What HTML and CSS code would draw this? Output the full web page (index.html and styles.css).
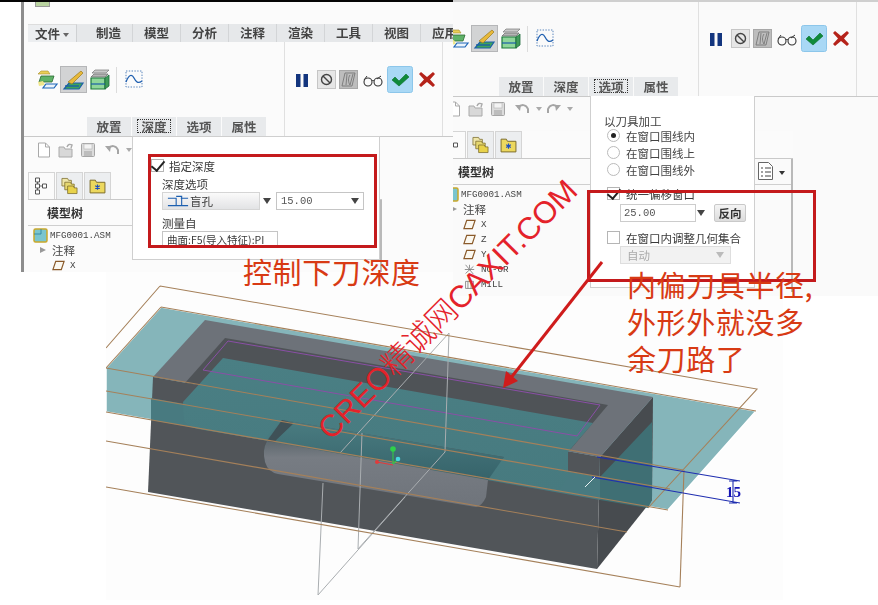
FILE: index.html
```html
<!DOCTYPE html>
<html lang="zh-CN">
<head>
<meta charset="utf-8">
<title>CREO 下刀深度</title>
<link rel="stylesheet" href="styles.css">
</head>
<body>
<svg class="defs" aria-hidden="true">
  <symbol id="i-ref" viewBox="0 0 22 20">
    <path d="M1 4l3-3 7 0 2 3z" fill="#e9cf58" stroke="#a58a2a" stroke-width=".6"/>
    <path d="M4 6h13l-2 6H2z" fill="#5fb268" stroke="#2b6b33" stroke-width=".8"/>
    <path d="M1 12l5-1 2 4-6 1z" fill="#f0e68c"/>
    <path d="M9 14h11l-3 4H6z" fill="#eaf3fb" stroke="#1f66b8" stroke-width="1.2"/>
  </symbol>
  <symbol id="i-pencil" viewBox="0 0 27 27">
    <rect x=".5" y=".5" width="26" height="26" fill="#d2d3d4" stroke="#b5b6b8"/>
    <path d="M4 23l5-6h14l-4 6z" fill="#3fa35a" stroke="#1a5fa8" stroke-width="1.2"/>
    <path d="M8 16L21 5l2 2-11 11z" fill="#e8b93a" stroke="#9a7a1c" stroke-width=".7"/>
    <path d="M5 20h14" stroke="#1a5fa8" stroke-width="1.4"/>
  </symbol>
  <symbol id="i-stack" viewBox="0 0 20 22">
    <path d="M5 1h14l-3 3H2z" fill="#c9c9c9" stroke="#777" stroke-width=".7"/>
    <path d="M4 5h14l-3 3H1z" fill="#b5b5b5" stroke="#666" stroke-width=".7"/>
    <path d="M1 9h14v11H1z" fill="#8fd69a" stroke="#1c7a3a" stroke-width="1.2"/>
    <path d="M15 9l4-3v11l-4 3z" fill="#3f9c5a" stroke="#1c6a3a" stroke-width=".8"/>
    <path d="M1 15h14" stroke="#1a5fa8" stroke-width="1.2"/>
  </symbol>
  <symbol id="i-wave" viewBox="0 0 18 18">
    <rect x="1" y="1" width="16" height="16" fill="none" stroke="#5b86bd" stroke-width="1" stroke-dasharray="1.4 1.4"/>
    <path d="M1 12c3-8 6-8 8-4s4 6 8 3" fill="none" stroke="#1f5fb0" stroke-width="1.3"/>
  </symbol>
  <symbol id="i-pause" viewBox="0 0 12 13">
    <rect x="0" y="0" width="4.5" height="13" fill="#13357e"/>
    <rect x="7.5" y="0" width="4.5" height="13" fill="#13357e"/>
  </symbol>
  <symbol id="i-stop" viewBox="0 0 19 19">
    <rect x=".5" y=".5" width="18" height="18" fill="#e6e6e6" stroke="#c6c6c6"/>
    <circle cx="9.500" cy="9.500" r="5" fill="none" stroke="#444" stroke-width="1.400"/>
    <path d="M6 6l7 7" stroke="#444" stroke-width="1.400"/>
  </symbol>
  <symbol id="i-hatch" viewBox="0 0 19 19">
    <rect x=".5" y=".5" width="18" height="18" fill="#bdbdbd" stroke="#a8a8a8"/>
    <path d="M3 16L6 3h10l-3 13zM8 4l-1 11M11 5c-2 3-2 7 0 10M14 4l-3 11" fill="none" stroke="#777" stroke-width=".9"/>
  </symbol>
  <symbol id="i-glasses" viewBox="0 0 20 12">
    <circle cx="5" cy="7" r="4" fill="none" stroke="#333" stroke-width="1.100"/>
    <circle cx="15" cy="7" r="4" fill="none" stroke="#333" stroke-width="1.100"/>
    <path d="M9 6c1-1 1-1 2 0M1 5l3-4M14 4l4-3" fill="none" stroke="#333" stroke-width="1"/>
  </symbol>
  <symbol id="i-check" viewBox="0 0 26 27">
    <rect x=".5" y=".5" width="25" height="26" rx="2" fill="#a9d8f5" stroke="#8cc6ea"/>
    <path d="M5 14l3-3 4 4 7-7 3 3-10 9z" fill="#0f8a3a" stroke="#0a6f2c" stroke-width=".6"/>
  </symbol>
  <symbol id="i-x" viewBox="0 0 16 15">
    <path d="M0 2l2-2 6 5 6-5 2 2-5 5.500 5 5.500-2 2-6-5-6 5-2-2 5-5.500z" fill="#b5231a"/>
  </symbol>
  <symbol id="i-new" viewBox="0 0 14 16">
    <path d="M1.500 1h7l4 4v10h-11z" fill="#fff" stroke="#a9a9a9"/>
    <path d="M8.500 1v4h4" fill="none" stroke="#a9a9a9"/>
  </symbol>
  <symbol id="i-open" viewBox="0 0 16 15">
    <path d="M1 4h5l1 2h7v8H1z" fill="#d8d8d8" stroke="#aaa"/>
    <path d="M9 4c1-3 3-3 5-2l-1 3" fill="none" stroke="#aaa" stroke-width="1.400"/>
  </symbol>
  <symbol id="i-save" viewBox="0 0 14 14">
    <rect x=".5" y=".5" width="13" height="13" rx="1" fill="#dcdcdc" stroke="#a6a6a6"/>
    <rect x="3" y="1" width="8" height="5" fill="#f4f4f4" stroke="#b5b5b5" stroke-width=".6"/>
    <rect x="3" y="8" width="8" height="5" fill="#bdbdbd"/>
  </symbol>
  <symbol id="i-undo" viewBox="0 0 15 12">
    <path d="M3 5c3-4 8-4 10 1l0 4" fill="none" stroke="#a5a5a5" stroke-width="2"/>
    <path d="M0 2l6 0-1 6z" fill="#a5a5a5"/>
  </symbol>
  <symbol id="i-redo" viewBox="0 0 15 12">
    <path d="M12 5c-3-4-8-4-10 1l0 4" fill="none" stroke="#a5a5a5" stroke-width="2"/>
    <path d="M15 2l-6 0 1 6z" fill="#a5a5a5"/>
  </symbol>
  <symbol id="i-tree" viewBox="0 0 14 18">
    <path d="M1 1h4v4H1zM1 7h4v4H1zM1 13h4v4H1zM8 7h4v4H8z" fill="#fff" stroke="#444" stroke-width=".9"/>
    <path d="M3 5v2M3 11v2M5 9h3" stroke="#444" stroke-width=".8"/>
  </symbol>
  <symbol id="i-folders" viewBox="0 0 18 18">
    <path d="M1 1h6l1 2h3v6H1z" fill="#efe6a8" stroke="#7a6a2a" stroke-width=".8"/>
    <path d="M4 5h6l1 2h3v6H4z" fill="#e6d870" stroke="#7a6a2a" stroke-width=".8"/>
    <path d="M7 9h6l1 2h3v6H7z" fill="#e8d24a" stroke="#7a6a2a" stroke-width=".8"/>
  </symbol>
  <symbol id="i-star" viewBox="0 0 16 15">
    <path d="M1 2h5l1 2h8v10H1z" fill="#ecd85e" stroke="#7a6a2a" stroke-width=".9"/>
    <path d="M8 6v5M5.800 7.200l4.400 2.600M10.200 7.200l-4.400 2.600" stroke="#1c4fc0" stroke-width="1.100"/>
  </symbol>
  <symbol id="i-asm" viewBox="0 0 15 15">
    <rect x="1" y="1" width="13" height="13" rx="1.500" fill="#7ac5cf" stroke="#c9a82a" stroke-width="1.500"/>
    <path d="M1 6h7V1" fill="none" stroke="#2a7fa0" stroke-width=".8"/>
  </symbol>
  <symbol id="i-plane" viewBox="0 0 14 11">
    <path d="M4 1h9l-3 9H1z" fill="#fbf8f0" stroke="#8a5a2a" stroke-width="1.300"/>
  </symbol>
  <symbol id="i-nc" viewBox="0 0 14 14">
    <path d="M2 1l10 12M12 3L2 12M7 1v5M1 7h12" stroke="#777" stroke-width="1" fill="none"/>
  </symbol>
  <symbol id="i-mill" viewBox="0 0 14 14">
    <path d="M2 3h10v9H2zM5 3v9M9 3v9" fill="none" stroke="#777" stroke-width="1"/>
  </symbol>
  <symbol id="i-list" viewBox="0 0 15 18">
    <path d="M.5.500h10l4 4v13H.5z" fill="#fff" stroke="#666"/>
    <path d="M3 6h2M7 6h6M3 10h2M7 10h6M3 14h2M7 14h6" stroke="#444" stroke-width="1.100"/>
  </symbol>
</svg>

<main class="canvas">
  <div class="black-rule"></div>

  <section class="window window-left">
    <div class="clipped-app-icon"></div>
    <nav class="menu-tabs">
      <span class="menu-file">文件 <i class="caret"></i></span>
      <span class="menu-tab">制造</span><span class="menu-tab">模型</span><span class="menu-tab">分析</span><span class="menu-tab">注释</span><span class="menu-tab">渲染</span><span class="menu-tab">工具</span><span class="menu-tab">视图</span><span class="menu-tab">应用</span>
    </nav>
    <div class="ribbon">
      <div class="ribbon-tools tools-left">
        <div class="tool-row">
          <svg class="ico-ref"><use href="#i-ref"/></svg>
          <svg class="ico-pencil"><use href="#i-pencil"/></svg>
          <svg class="ico-stack"><use href="#i-stack"/></svg>
          <span class="tool-sep"></span>
          <svg class="ico-wave"><use href="#i-wave"/></svg>
        </div>
        <div class="sub-tabs">
          <span class="sub-tab">放置</span><span class="sub-tab"><b class="focus">深度</b></span><span class="sub-tab">选项</span><span class="sub-tab">属性</span>
        </div>
      </div>
      <div class="ribbon-actions">
        <svg class="ico-pause"><use href="#i-pause"/></svg>
        <svg class="ico-stop"><use href="#i-stop"/></svg>
        <svg class="ico-hatch"><use href="#i-hatch"/></svg>
        <svg class="ico-glasses"><use href="#i-glasses"/></svg>
        <svg class="ico-check"><use href="#i-check"/></svg>
        <svg class="ico-x"><use href="#i-x"/></svg>
      </div>
      <div class="ribbon-rest"></div>
    </div>
    <div class="quick-bar quick-left">
      <svg class="q-new"><use href="#i-new"/></svg>
      <svg class="q-open"><use href="#i-open"/></svg>
      <svg class="q-save"><use href="#i-save"/></svg>
      <svg class="q-undo"><use href="#i-undo"/></svg>
      <i class="q-caret"></i>
    </div>
    <aside class="tree tree-left">
      <div class="tree-tabs">
        <span class="tree-tab"><svg class="t-ico"><use href="#i-tree"/></svg></span>
        <span class="tree-tab"><svg class="t-ico"><use href="#i-folders"/></svg></span>
        <span class="tree-tab"><svg class="t-ico"><use href="#i-star"/></svg></span>
      </div>
      <div class="tree-title">模型树</div>
      <ul class="tree-list">
        <li class="root"><svg class="n-asm"><use href="#i-asm"/></svg><span class="mono">MFG0001.ASM</span></li>
        <li class="notes"><i class="expander"></i>注释</li>
        <li><svg class="n-plane"><use href="#i-plane"/></svg><span class="mono">X</span></li>
      </ul>
    </aside>
    <div class="popup popup-depth">
      <label class="check-line"><span class="box checked"></span>指定深度</label>
      <div class="field-label first">深度选项</div>
      <div class="field-row">
        <span class="select-blind">
          <svg class="blind-ico" viewBox="0 0 24 14"><path d="M1 4h9v8M15 4h8M10 2h6v10M1 12h22" fill="none" stroke="#1c5fb0" stroke-width="1.200"/></svg>盲孔
        </span>
        <i class="down-arrow"></i>
        <span class="select-val"><span class="mono val">15.00</span><i class="down-arrow"></i></span>
      </div>
      <div class="field-label second">测量自</div>
      <div class="ref-box">曲面:F5(导入特征):PI</div>
    </div>
  </section>

  <svg class="model" viewBox="106 272 677 328" aria-hidden="true">
    <defs>
      <linearGradient id="floor" x1="0" y1="0" x2="0" y2="1">
        <stop offset="0" stop-color="#4a7f84"/><stop offset="1" stop-color="#477a7f"/>
      </linearGradient>
      <linearGradient id="notchwall" x1="0" y1="0" x2="0" y2="1">
        <stop offset="0" stop-color="#4a7c81"/><stop offset="1" stop-color="#36636a"/>
      </linearGradient>
      <linearGradient id="notchfloor" x1="0" y1="0" x2="0" y2="1">
        <stop offset="0" stop-color="#5d686e"/><stop offset=".25" stop-color="#777c83"/><stop offset="1" stop-color="#6f747b"/>
      </linearGradient>
    </defs>
    <polygon class="teal-plane" points="161,307 756,411 668,510 106,412 106,368"/>
    <polygon class="face-side" points="600,457 653,397 652,500 597,569"/>
    <polygon class="face-side-teal" points="600,477 652,422 652,500 648,508 600,500"/>
    <polygon class="face-front" points="153,377 600,457 597,569 148,492"/>
    <polygon class="face-front-teal" points="151,398 600,477 600,500 151,420"/>
    <polygon class="rim" points="205,320 653,397 600,457 153,377"/>
    <polygon class="wall" points="225,338 608,405 570,450 185,383"/>
    <path class="floor" d="M223 358L593 423L568 452L568 478L560 490L487 478L504 457L282 420L263 440L198 429Q188 427 184 420L183 402Z"/>
    <polygon class="notch-wall" points="282,420 504,457 488,480 266,441"/>
    <path class="notch-corner" d="M282 420L294 423L272 444L265 462Q262 450 267 441Z"/>
    <path class="notch-floor" d="M267 441L488 480L486 497Q482 506 476 507L278 474Q268 472 265 462Q262 450 267 441Z"/>
    <polygon class="purple" points="228,341 600,405 577,436 203,370"/>
    <g class="grey-lines">
      <path d="M449 333L340 453M449 333L445 452L358 549M362 433L358 549M323 483L318 595L405 497"/>
    </g>
    <g class="brown-lines">
      <path d="M160 286L757 389L648 508M106 348L160 286"/>
      <path d="M161 307L756 411M106 368L161 307"/>
      <path d="M106 368L683 470M106 391L670 489M106 412L668 510M106 441L627 532M106 487L680 587"/>
      <path d="M684 470L680 587"/>
    </g>
    <g class="dims">
      <path d="M597 457L740 481M592 477L740 503M733 481V503M729 481H737M729 503H737"/>
      <text x="726" y="497">15</text>
    </g>
    <path class="white-edge" d="M585 487L595 477"/>
    <g class="axes">
      <path class="ax-g" d="M393 449L393 464"/>
      <path class="ax-c" d="M393 464L398 459"/>
      <path class="ax-r" d="M377 462L393 465"/>
      <circle class="dot-g" cx="393" cy="449" r="2.800"/>
      <circle class="dot-c" cx="398" cy="459" r="2.300"/>
      <circle class="dot-r" cx="377" cy="462" r="2"/>
    </g>
  </svg>

  <section class="window window-right">
    <div class="ribbon ribbon-top">
      <div class="ribbon-tools tools-right">
        <div class="tool-row">
          <svg class="ico-ref"><use href="#i-ref"/></svg>
          <svg class="ico-pencil"><use href="#i-pencil"/></svg>
          <svg class="ico-stack"><use href="#i-stack"/></svg>
          <span class="tool-sep"></span>
          <svg class="ico-wave"><use href="#i-wave"/></svg>
        </div>
        <div class="sub-tabs">
          <span class="sub-tab">放置</span><span class="sub-tab">深度</span><span class="sub-tab"><b class="focus">选项</b></span><span class="sub-tab">属性</span>
        </div>
      </div>
      <div class="ribbon-actions">
        <svg class="ico-pause"><use href="#i-pause"/></svg>
        <svg class="ico-stop"><use href="#i-stop"/></svg>
        <svg class="ico-hatch"><use href="#i-hatch"/></svg>
        <svg class="ico-glasses"><use href="#i-glasses"/></svg>
        <svg class="ico-check"><use href="#i-check"/></svg>
        <svg class="ico-x"><use href="#i-x"/></svg>
      </div>
      <div class="ribbon-rest"></div>
    </div>
    <div class="quick-bar quick-right">
      <svg class="q-new"><use href="#i-new"/></svg>
      <svg class="q-open"><use href="#i-open"/></svg>
      <svg class="q-save"><use href="#i-save"/></svg>
      <svg class="q-undo"><use href="#i-undo"/></svg>
      <i class="q-caret"></i>
      <svg class="q-redo"><use href="#i-redo"/></svg>
      <i class="q-caret"></i>
    </div>
    <aside class="tree tree-right">
      <div class="tree-tabs">
        <span class="tree-tab"><svg class="t-ico"><use href="#i-tree"/></svg></span>
        <span class="tree-tab"><svg class="t-ico"><use href="#i-folders"/></svg></span>
        <span class="tree-tab"><svg class="t-ico"><use href="#i-star"/></svg></span>
      </div>
      <div class="tree-title">模型树<svg class="t-list"><use href="#i-list"/></svg><i class="t-caret"></i></div>
      <ul class="tree-list">
        <li class="root"><svg class="n-asm"><use href="#i-asm"/></svg><span class="mono">MFG0001.ASM</span></li>
        <li class="notes"><i class="expander"></i>注释</li>
        <li><svg class="n-plane"><use href="#i-plane"/></svg><span class="mono">X</span></li>
        <li><svg class="n-plane"><use href="#i-plane"/></svg><span class="mono">Z</span></li>
        <li><svg class="n-plane"><use href="#i-plane"/></svg><span class="mono">Y</span></li>
        <li><svg class="n-plane"><use href="#i-nc"/></svg><span class="mono">NC-OR</span></li>
        <li><svg class="n-plane"><use href="#i-mill"/></svg><span class="mono">MILL</span></li>
      </ul>
    </aside>
    <div class="popup popup-options">
      <div class="opt-title">以刀具加工</div>
      <label class="radio-line"><span class="radio on"></span>在窗口围线内</label>
      <label class="radio-line"><span class="radio"></span>在窗口围线上</label>
      <label class="radio-line"><span class="radio"></span>在窗口围线外</label>
      <label class="check-line opt-check"><span class="box checked"></span>统一偏移窗口</label>
      <div class="offset-row">
        <span class="offset-input"><span class="mono val">25.00</span></span><i class="down-arrow boxed"></i>
        <span class="flip-btn">反向</span>
      </div>
      <label class="check-line opt-check2"><span class="box"></span>在窗口内调整几何集合</label>
      <div class="auto-select">自动<i class="down-arrow faint"></i></div>
    </div>
  </section>

  <div class="red-box box-depth"></div>
  <div class="red-box box-offset"></div>
  <svg class="pointer" viewBox="490 250 120 150" aria-hidden="true">
    <path class="pointer-line" d="M602 262L510 379"/>
    <polygon class="pointer-head" points="503,388 506,371 518,381"/>
  </svg>
  <p class="note note-depth">控制下刀深度</p>
  <p class="note note-offset">内偏刀具半径,<br>外形外就没多<br>余刀路了</p>
  <div class="watermark">CREO精诚网CAXIT.COM</div>
</main>
</body>
</html>
```
FILE: styles.css
```css
* { box-sizing: border-box; }
html, body { margin: 0; padding: 0; background: #fff; }
body { width: 878px; height: 605px; overflow: hidden; font-family: "Noto Sans CJK SC", "Liberation Sans", sans-serif; color: #3a3a3a; }
ul { list-style: none; margin: 0; padding: 0; }
p { margin: 0; }
.defs { position: absolute; width: 0; height: 0; }
.canvas { position: relative; width: 878px; height: 605px; overflow: hidden; background: #fff; }
.black-rule { position: absolute; left: 0; top: 0; width: 453px; height: 2px; background: #050505; z-index: 5; }
.mono { font-family: "Liberation Mono", monospace; }

/* windows on the canvas */
.window { position: absolute; overflow: hidden; background: #fbfbfb; filter: blur(.25px); }
.window-left { left: 21px; top: 0; width: 432px; height: 272px; border-left: 3px solid #8d8d8d; }
.window-right { left: 453px; top: 0; width: 425px; height: 296px; border-top: 2px solid #cfcfcf; background: #fafafa; z-index: 2; }
.clipped-app-icon { width: 15px; height: 7px; margin-left: 11px; margin-bottom: 17px; background: #b9d3a0; border: 1px solid #999; border-top: 0; }

.menu-tabs { display: flex; height: 18px; margin-left: 4px; background: #e6e8ea; font-size: 12.5px; font-weight: 700; color: #444; line-height: 18px; white-space: nowrap; overflow: hidden; }
.menu-file { flex: 0 0 49px; padding-left: 7px; background: #eceef0; border-right: 1px solid #cfd1d3; margin-right: 8px; border-top: 1px solid #ddd; color: #444; }
.caret { display: inline-block; border: 3px solid transparent; border-top: 4px solid #666; border-bottom: 0; vertical-align: 2px; }
.menu-tab { flex: 0 0 48px; text-align: center; border-right: 1px solid #d3d5d7; border-left: 0; }

/* ribbon */
.ribbon { display: flex; height: 95px; border-bottom: 1px solid #c9c9c9; }
.ribbon-top { height: 95px; }
.ribbon-tools { display: flex; flex-direction: column; justify-content: space-between; width: 261px; border-right: 1px solid #e0e0e0; flex: none; }
.tools-left .tool-row { padding: 24px 0 0 13px; }
.tools-right { width: 246px; }
.tools-right .tool-row { padding: 23px 0 0 0; margin-left: -5px; }
.tool-row { display: flex; align-items: flex-start; }
.tool-row svg { flex: none; display: block; }
.ico-ref { width: 22px; height: 20px; margin-top: 4px; margin-right: 1px; }
.ico-pencil { width: 27px; height: 27px; margin-right: 3px; }
.ico-stack { width: 20px; height: 22px; margin-top: 3px; }
.tool-sep { width: 1px; height: 26px; margin: 1px 8px 0 6px; background: #dcdcdc; }
.ico-wave { width: 18px; height: 18px; margin-top: 4px; }
.sub-tabs { display: flex; margin-left: 63px; height: 19px; background: transparent; font-size: 12.5px; font-weight: 700; color: #555; line-height: 19px; }
.tools-right .sub-tabs { margin-left: 46px; }
.sub-tab { width: 44px; margin-right: 1px; text-align: center; background: #e8eaec; }
.focus { display: inline-block; font-weight: 700; height: 14px; line-height: 13px; padding: 0 3px; margin-top: 2px; border: 1px dotted #333; vertical-align: top; color: #555; }
.ribbon-actions { display: flex; align-items: flex-start; width: 158px; flex: none; padding: 24px 0 0 11px; border-right: 1px solid #e0e0e0; }
.window-right .ribbon-actions { padding-top: 23px; }
.ribbon-actions svg { display: block; flex: none; }
.ico-pause { width: 12px; height: 13px; margin: 8px 8px 0 0; }
.ico-stop { width: 19px; height: 19px; margin: 4px 3px 0 1px; }
.ico-hatch { width: 19px; height: 19px; margin: 4px 5px 0 0; }
.ico-glasses { width: 20px; height: 12px; margin: 9px 4px 0 0; }
.ico-check { width: 26px; height: 27px; margin-right: 6px; }
.ico-x { width: 16px; height: 15px; margin-top: 6px; }
.ribbon-rest { flex: 1; }

/* quick access */
.quick-bar { display: flex; align-items: center; height: 20px; margin-top: 3px; }
.quick-bar svg { display: block; flex: none; }
.quick-left { padding-left: 13px; }
.quick-right { margin-left: -6px; margin-top: 2px; }
.q-new { width: 14px; height: 16px; margin-right: 7px; }
.q-open { width: 16px; height: 15px; margin-right: 7px; }
.q-save { width: 14px; height: 14px; margin-right: 10px; }
.q-undo { width: 15px; height: 12px; margin-right: 6px; }
.q-redo { width: 15px; height: 12px; margin-right: 6px; margin-left: 4px; }
.q-caret { width: 0; height: 0; border: 3px solid transparent; border-top: 4px solid #aaa; border-bottom: 0; }

/* model tree */
.tree { width: 354px; border-right: 2px solid #b9b9b9; }
.tree-left { margin: 12px 0 0 4px; }
.tree-right { margin: 12px 0 0 -14px; }
.tree-tabs { display: flex; height: 28px; border-bottom: 1px solid #c9c9c9; margin-right: -2px; background: #fbfbfb; }
.tree-tab { display: flex; align-items: center; justify-content: center; width: 27px; margin-right: 1px; background: #eceef0; border: 1px solid #d5d5d5; border-bottom: 0; }
.tree-tab:first-child { background: #fbfbfb; }
.t-ico { width: 17px; height: 18px; display: block; }
.tree-title { position: relative; display: flex; align-items: center; height: 26px; padding-left: 19px; border-bottom: 1px solid #cfcfcf; font-size: 12px; font-weight: 700; color: #333; }
.t-list { position: absolute; right: 18px; top: 3px; width: 15px; height: 18px; }
.t-caret { position: absolute; right: 6px; top: 12px; border: 3px solid transparent; border-top: 4px solid #333; border-bottom: 0; }
.tree-list { font-size: 11.5px; color: #444; padding-top: 1px; }
.tree-list li { display: flex; align-items: center; height: 15px; padding-left: 24px; white-space: nowrap; }
.tree-list .mono { font-size: 9.200px; color: #444; }
.tree-list li.root { padding-left: 5px; height: 16px; }
.tree-list li.notes { padding: 0 0 2px 12px; }
.n-asm { width: 15px; height: 15px; margin-right: 2px; flex: none; }
.n-plane { width: 13px; height: 11px; margin-right: 5px; flex: none; }
.expander { width: 0; height: 0; margin-right: 6px; border: 3.500px solid transparent; border-left: 6px solid #999; border-right: 0; }

/* popups */
.popup { position: absolute; background: #fff; border: 1px solid #cfcfcf; }
.popup-depth { left: 108px; top: 136px; width: 248px; height: 124px; padding: 20px 0 0 18px; font-size: 11.500px; }
.popup-options { left: 137px; top: 94px; width: 165px; height: 192px; padding: 17px 0 0 13px; font-size: 11.500px; border-top: 0; }
.check-line { display: flex; align-items: center; height: 17px; white-space: nowrap; color: #3a3a3a; }
.box { flex: none; width: 13px; height: 13px; margin-right: 5px; background: #fff; border: 1px solid #b5b5b5; position: relative; }
.box.checked::after { content: ""; position: absolute; left: 2px; top: -2px; width: 6px; height: 11px; border: solid #222; border-width: 0 2.500px 2.500px 0; transform: rotate(40deg); }
.field-label { line-height: 15px; white-space: nowrap; padding-left: 11px; }
.field-label.first { margin-top: 3px; }
.field-label.second { margin-top: 6px; }
.field-row { display: flex; align-items: center; height: 18px; margin: 0 0 0 11px; }
.select-blind { display: flex; align-items: center; width: 98px; height: 18px; padding-left: 4px; background: linear-gradient(#fafafa, #e2e3e5); border: 1px solid #d5d5d5; }
.blind-ico { width: 22px; height: 14px; margin-right: 1px; }
.down-arrow { display: inline-block; width: 0; height: 0; margin-left: 3px; border: 4px solid transparent; border-top: 6px solid #444; border-bottom: 0; }
.select-val { display: flex; align-items: center; justify-content: space-between; width: 88px; height: 18px; margin-left: 5px; padding: 0 4px 0 4px; background: #fff; border: 1px solid #c5c5c5; }
.val { font-size: 10.500px; color: #555; }
.ref-box { width: 116px; height: 16px; margin-left: 11px; margin-top: 0; padding-left: 4px; font-size: 10.500px; line-height: 15px; white-space: nowrap; overflow: hidden; background: #fff; border: 1px solid #c5c5c5; }
.opt-title { line-height: 16px; color: #444; margin-bottom: -2px; }
.radio-line { display: flex; align-items: center; height: 17px; padding-left: 3px; white-space: nowrap; color: #444; }
.radio { width: 13px; height: 13px; margin-right: 6px; border: 1px solid #bbb; border-radius: 50%; background: #fff; flex: none; position: relative; }
.radio.on::after { content: ""; position: absolute; left: 3px; top: 3px; width: 5px; height: 5px; border-radius: 50%; background: #222; }
.opt-check { margin-top: 7px; padding-left: 3px; }
.opt-check .box, .opt-check2 .box { margin-right: 6px; }
.offset-row { display: flex; align-items: center; height: 18px; margin: 2px 0 0 16px; }
.offset-input { display: flex; align-items: center; width: 76px; height: 18px; padding-left: 3px; border: 1px solid #ccc; background: #fff; }
.down-arrow.boxed { margin-left: 1px; }
.flip-btn { width: 32px; height: 18px; margin-left: 9px; text-align: center; font-weight: 700; font-size: 11.500px; line-height: 17px; background: linear-gradient(#f4f4f4, #dcdcdc); border: 1px solid #c9c9c9; border-radius: 2px; color: #333; }
.opt-check2 { margin-top: 7px; padding-left: 3px; }
.auto-select { display: flex; align-items: center; justify-content: space-between; width: 111px; height: 18px; margin: 0 0 0 16px; padding: 0 6px; color: #aaa; background: #f2f2f2; border: 1px solid #dedede; }
.down-arrow.faint { border-top-color: #bbb; }

/* annotations over the picture */
.red-box { position: absolute; border: 3px solid #c41a1c; z-index: 6; }
.box-depth { left: 148px; top: 154px; width: 229px; height: 94px; }
.box-offset { left: 587px; top: 190px; width: 229px; height: 92px; }
.pointer { position: absolute; left: 490px; top: 250px; width: 120px; height: 150px; z-index: 6; }
.pointer-line { fill: none; stroke: #cf1c1c; stroke-width: 3; }
.pointer-head { fill: #cf1c1c; }
.note { position: absolute; z-index: 7; font-size: 29px; line-height: 37px; color: #d83a14; white-space: nowrap; font-weight: 400; letter-spacing: .6px; }
.note-depth { left: 243px; top: 253px; }
.note-offset { left: 627px; top: 266px; }
.watermark { position: absolute; left: 264px; top: 290px; width: 368px; z-index: 8; text-align: center; font-family: "Liberation Sans", "Noto Sans CJK SC", sans-serif; font-size: 31px; line-height: 40px; color: #e4222a; white-space: nowrap; transform: rotate(-45deg); font-weight: 300; }

/* 3D model */
.model { position: absolute; left: 106px; top: 272px; width: 677px; height: 328px; background: #fdfdfd; filter: blur(.3px); z-index: 1; }
.teal-plane { fill: #85b5ba; stroke: #fff; stroke-width: 1.500; }
.face-side { fill: #474b4f; }
.face-side-teal { fill: #3f6f74; }
.face-front { fill: #515559; }
.face-front-teal { fill: #487a80; }
.rim { fill: #6d7279; }
.wall { fill: #4f5357; }
.floor { fill: url(#floor); }
.notch-wall { fill: url(#notchwall); }
.notch-corner { fill: #3f5157; }
.notch-floor { fill: url(#notchfloor); }
.purple { fill: none; stroke: #8a4fa6; stroke-width: 1; }
.grey-lines path { fill: none; stroke: #a9adb0; stroke-width: 1; }
.brown-lines path { fill: none; stroke: #a5805a; stroke-width: 1.100; }
.dims path { fill: none; stroke: #1f2eb0; stroke-width: 1.100; }
.dims text { fill: #1414b4; font-family: "Liberation Serif", serif; font-size: 15px; font-weight: 700; }
.white-edge { stroke: #e8f2f3; stroke-width: 1; fill: none; }
.ax-g { stroke: #35c24a; stroke-width: 1.200; fill: none; }
.ax-c { stroke: #35c24a; stroke-width: 1.200; fill: none; }
.ax-r { stroke: #e23a3a; stroke-width: 1.200; fill: none; }
.dot-g { fill: #2fd04a; }
.dot-c { fill: #46d8e0; }
.dot-r { fill: #e23a3a; }
```
